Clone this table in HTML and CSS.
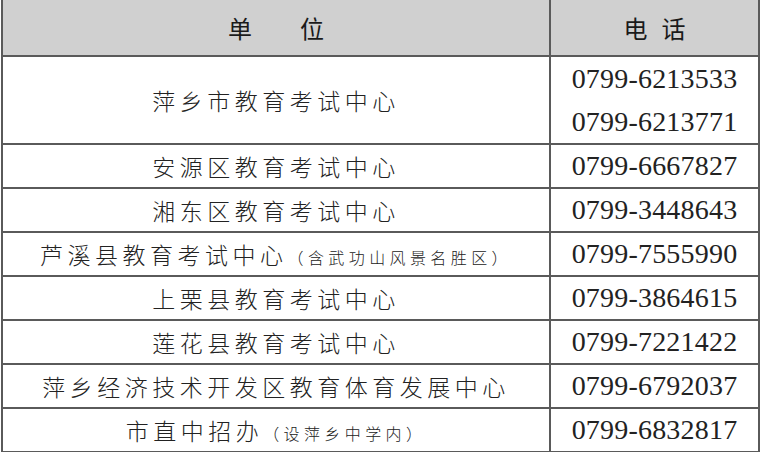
FILE: index.html
```html
<!DOCTYPE html>
<html lang="zh-CN">
<head>
<meta charset="utf-8">
<title>教育考试中心联系电话</title>
<link rel="stylesheet" href="styles.css">
</head>
<body>
<table class="contacts">
  <thead>
    <tr class="head-row">
      <th class="unit-head"><span class="hd-a">单</span><span class="hd-b">位</span></th>
      <th class="phone-head"><span class="hd-c">电</span><span>话</span></th>
    </tr>
  </thead>
  <tbody>
    <tr class="row-double">
      <td class="unit">萍乡市教育考试中心</td>
      <td class="phone"><div class="num">0799-6213533</div><div class="num">0799-6213771</div></td>
    </tr>
    <tr class="row"><td class="unit">安源区教育考试中心</td><td class="phone"><div class="num">0799-6667827</div></td></tr>
    <tr class="row"><td class="unit">湘东区教育考试中心</td><td class="phone"><div class="num">0799-3448643</div></td></tr>
    <tr class="row"><td class="unit">芦溪县教育考试中心<span class="note">（含武功山风景名胜区）</span></td><td class="phone"><div class="num">0799-7555990</div></td></tr>
    <tr class="row"><td class="unit">上栗县教育考试中心</td><td class="phone"><div class="num">0799-3864615</div></td></tr>
    <tr class="row"><td class="unit">莲花县教育考试中心</td><td class="phone"><div class="num">0799-7221422</div></td></tr>
    <tr class="row"><td class="unit">萍乡经济技术开发区教育体育发展中心</td><td class="phone"><div class="num">0799-6792037</div></td></tr>
    <tr class="row last"><td class="unit">市直中招办<span class="note">（设萍乡中学内）</span></td><td class="phone"><div class="num">0799-6832817</div></td></tr>
  </tbody>
</table>
</body>
</html>
```

FILE: styles.css
```css
html, body {
  margin: 0;
  padding: 0;
  background: #ffffff;
}

body {
  width: 761px;
  height: 452px;
  overflow: hidden;
}

.contacts {
  border-collapse: collapse;
  table-layout: fixed;
  width: 759px;
  margin-left: 1px;
  color: #222222;
}

.contacts th,
.contacts td {
  border: 2px solid #5a5a5a;
  padding: 0;
  text-align: center;
  vertical-align: middle;
}

.head-row th {
  border-top: none;
  background: #d0d0d0;
  height: 55px;
  font-family: "Noto Sans CJK SC", sans-serif;
  font-weight: 400;
  font-size: 24px;
  color: #1a1a1a;
}

.unit-head {
  width: 546px;
}

.hd-a {
  margin-right: 48px;
}

.hd-c {
  margin-right: 14px;
}

.unit {
  font-family: "Noto Sans CJK SC", sans-serif;
  font-weight: 300;
  font-size: 23px;
  letter-spacing: 4.5px;
  white-space: nowrap;
}

.note {
  font-size: 16px;
  letter-spacing: 4.4px;
}

.phone {
  font-family: "Liberation Serif", "Times New Roman", serif;
  font-size: 28px;
  letter-spacing: 0.2px;
  line-height: 40px;
}

.num {
  line-height: 40px;
}

.row-double .num {
  line-height: 43px;
}

.row-double td {
  height: 86px;
}

.row td {
  height: 42px;
}
```
